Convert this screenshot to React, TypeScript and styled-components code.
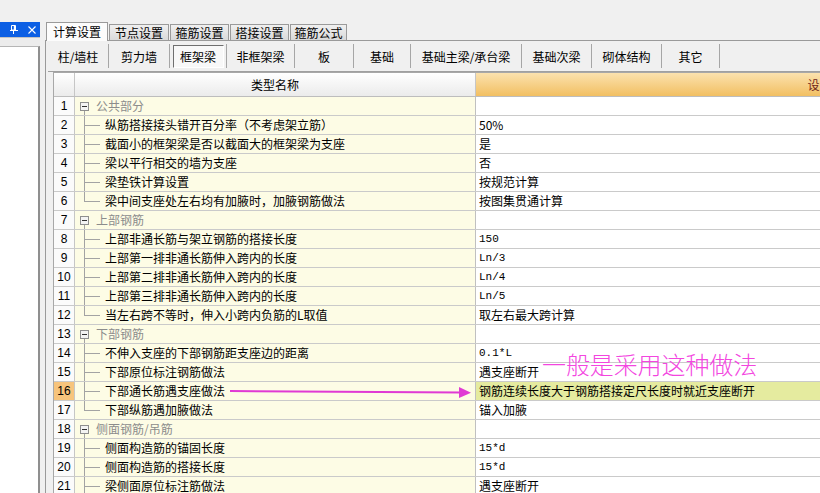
import React from 'react';
import styled, { createGlobalStyle } from 'styled-components';

const CJK = `"Noto Sans CJK SC", "Liberation Sans", sans-serif`;

const GlobalStyle = createGlobalStyle`
  html, body { margin: 0; padding: 0; background: #f0f0f0; }
  body { font-family: ${CJK}; font-size: 12px; color: #000; }
  #root { width: 820px; height: 493px; overflow: hidden; }
`;

const Screen = styled.div`
  position: relative;
  display: flex;
  width: 820px;
  height: 493px;
  padding-top: 22px;
  box-sizing: border-box;
  overflow: hidden;
  background: #f0f0f0;
`;

const Dock = styled.aside`
  width: 40px;
  flex-shrink: 0;
  display: flex;
  flex-direction: column;
`;

const DockTitle = styled.div`
  height: 15px;
  background: #0c5fe4;
  display: flex;
  align-items: center;
  gap: 10px;
  padding-left: 10px;
`;

const DockGap = styled.div`
  height: 8px;
  border-top: 1px solid #c4c4c4;
  background: #ececec;
`;

const DockBody = styled.div`
  flex: 1;
  background: #fff;
  border-top: 1px solid #b5b5b5;
  border-right: 2px solid #8f8f8f;
`;

const Main = styled.main`
  flex: 1;
  min-width: 0;
  margin-left: 5px;
  display: flex;
  flex-direction: column;
`;

const TabStrip = styled.div`
  height: 18px;
  display: flex;
  align-items: flex-end;
  gap: 1px;
  padding-left: 1px;
  position: relative;
  z-index: 1;
`;

const Tab = styled.div<{ $active?: boolean; $w: number }>`
  width: ${(p) => p.$w}px;
  height: ${(p) => (p.$active ? 19 : 16)}px;
  box-sizing: border-box;
  border: 1px solid #9a9a9a;
  border-bottom: none;
  background: ${(p) => (p.$active ? '#fcfcfc' : 'linear-gradient(#f0f0f0, #d9d9d9)')};
  margin-bottom: ${(p) => (p.$active ? '-1px' : '0')};
  display: flex;
  align-items: center;
  justify-content: center;
  font-size: 12px;
  line-height: 1;
  white-space: nowrap;
`;

const Frame = styled.section`
  flex: 1;
  min-height: 0;
  display: flex;
  flex-direction: column;
  border-top: 1px solid #9a9a9a;
  border-left: 1px solid #9a9a9a;
  padding-left: 2px;
  background: #f0f0f0;
`;

const Toolbar = styled.div`
  height: 30px;
  flex-shrink: 0;
  display: flex;
  align-items: center;
  border-bottom: 1px solid #a0a0a0;
`;

const ToolButton = styled.div<{ $w: number }>`
  width: ${(p) => p.$w}px;
  height: 24px;
  flex-shrink: 0;
  box-sizing: border-box;
  display: flex;
  align-items: center;
  justify-content: center;
  border-right: 1px solid #a6a6a6;
  font-size: 12px;
  white-space: nowrap;
`;

const Pressed = styled.span`
  display: flex;
  align-items: center;
  justify-content: center;
  width: calc(100% - 5px);
  height: 23px;
  box-sizing: border-box;
  border: 1px solid;
  border-color: #6f6f6f #ffffff #ffffff #6f6f6f;
  background: #f8f8f8;
`;

const Sheet = styled.div`
  flex: 1;
  min-height: 0;
  margin-left: 5px;
  overflow: hidden;
  border-top: 1px solid #a8a8a8;
  border-left: 1px solid #a8a8a8;
  background: #fff;
`;

const HeaderRow = styled.div`
  display: grid;
  grid-template-columns: 21px 401px 700px;
  height: 24px;
  box-sizing: border-box;
  border-bottom: 1px solid #bdbdbd;
`;

const HeadCell = styled.div<{ $accent?: boolean }>`
  box-sizing: border-box;
  border-right: 1px solid #c6c6c6;
  display: flex;
  align-items: center;
  justify-content: center;
  font-size: 12px;
  white-space: nowrap;
  overflow: hidden;
  color: ${(p) => (p.$accent ? '#6e2418' : '#000')};
  background: ${(p) => (p.$accent ? 'linear-gradient(#fbe2ae, #f2bf62)' : 'linear-gradient(#ffffff, #ebebeb)')};
`;

const Row = styled.div`
  display: grid;
  grid-template-columns: 21px 401px 700px;
  height: 19px;
  box-sizing: border-box;
  border-bottom: 1px solid #cacaca;
`;

const NumCell = styled.div<{ $hl?: boolean }>`
  box-sizing: border-box;
  border-right: 1px solid #c6c6c6;
  display: flex;
  align-items: center;
  justify-content: center;
  font-family: "Liberation Sans", sans-serif;
  font-size: 12px;
  background: ${(p) => (p.$hl ? '#f7c47c' : '#fbfbfb')};
`;

const NameCell = styled.div`
  box-sizing: border-box;
  border-right: 1px solid #c0c0c0;
  display: flex;
  align-items: center;
  overflow: hidden;
  white-space: nowrap;
  background: #fdfce5;
`;

const GutterSvg = styled.svg`
  display: block;
  flex-shrink: 0;
`;

const NameText = styled.span<{ $group?: boolean }>`
  font-size: 12px;
  line-height: 18px;
  color: ${(p) => (p.$group ? '#8c8c8c' : '#000')};
`;

const ValueCell = styled.div<{ $hl?: boolean }>`
  box-sizing: border-box;
  display: flex;
  align-items: center;
  padding-left: 3px;
  overflow: hidden;
  white-space: nowrap;
  background: ${(p) => (p.$hl ? '#e5eb9f' : '#ffffff')};
`;

const ValueText = styled.span<{ $mono?: boolean }>`
  font-family: ${(p) => (p.$mono ? `"Liberation Mono", monospace` : CJK)};
  font-size: ${(p) => (p.$mono ? 11 : 12)}px;
  line-height: 18px;
`;

const Note = styled.div`
  position: absolute;
  left: 542px;
  top: 349px;
  font-family: ${CJK};
  font-size: 24px;
  line-height: 30px;
  font-weight: 300;
  letter-spacing: -0.1px;
  color: #f346df;
  white-space: nowrap;
  pointer-events: none;
`;

const Arrow = styled.svg`
  position: absolute;
  left: 228px;
  top: 384px;
  pointer-events: none;
`;

type Item = { name: string; value?: string; group?: boolean; last?: boolean; hl?: boolean; mono?: boolean };

const items: Item[] = [
  { name: '公共部分', group: true },
  { name: '纵筋搭接接头错开百分率（不考虑架立筋）', value: '50%' },
  { name: '截面小的框架梁是否以截面大的框架梁为支座', value: '是' },
  { name: '梁以平行相交的墙为支座', value: '否' },
  { name: '梁垫铁计算设置', value: '按规范计算' },
  { name: '梁中间支座处左右均有加腋时，加腋钢筋做法', value: '按图集贯通计算', last: true },
  { name: '上部钢筋', group: true },
  { name: '上部非通长筋与架立钢筋的搭接长度', value: '150', mono: true },
  { name: '上部第一排非通长筋伸入跨内的长度', value: 'Ln/3', mono: true },
  { name: '上部第二排非通长筋伸入跨内的长度', value: 'Ln/4', mono: true },
  { name: '上部第三排非通长筋伸入跨内的长度', value: 'Ln/5', mono: true },
  { name: '当左右跨不等时，伸入小跨内负筋的L取值', value: '取左右最大跨计算', last: true },
  { name: '下部钢筋', group: true },
  { name: '不伸入支座的下部钢筋距支座边的距离', value: '0.1*L', mono: true },
  { name: '下部原位标注钢筋做法', value: '遇支座断开' },
  { name: '下部通长筋遇支座做法', value: '钢筋连续长度大于钢筋搭接定尺长度时就近支座断开', hl: true },
  { name: '下部纵筋遇加腋做法', value: '锚入加腋', last: true },
  { name: '侧面钢筋/吊筋', group: true },
  { name: '侧面构造筋的锚固长度', value: '15*d', mono: true },
  { name: '侧面构造筋的搭接长度', value: '15*d', mono: true },
  { name: '梁侧面原位标注筋做法', value: '遇支座断开' },
];

const tabs = [
  { label: '计算设置', w: 62, active: true },
  { label: '节点设置', w: 60 },
  { label: '箍筋设置', w: 59 },
  { label: '搭接设置', w: 59 },
  { label: '箍筋公式', w: 57 },
];

const tools = [
  { label: '柱/墙柱', w: 61 },
  { label: '剪力墙', w: 61 },
  { label: '框架梁', w: 57, pressed: true },
  { label: '非框架梁', w: 68 },
  { label: '板', w: 59 },
  { label: '基础', w: 57 },
  { label: '基础主梁/承台梁', w: 111 },
  { label: '基础次梁', w: 70 },
  { label: '砌体结构', w: 70 },
  { label: '其它', w: 58 },
];

const LINE = '#a3a3a3';

function Gutter({ group, last }: { group?: boolean; last?: boolean }) {
  if (group) {
    return (
      <GutterSvg width={21} height={18} viewBox="0 0 21 18">
        <line x1="9.5" y1="14" x2="9.5" y2="18" stroke={LINE} />
        <rect x="5.5" y="5.5" width="8" height="8" fill="#f3f3f3" stroke="#8e8e8e" />
        <line x1="7" y1="9.5" x2="12" y2="9.5" stroke="#303030" />
      </GutterSvg>
    );
  }
  return (
    <GutterSvg width={30} height={18} viewBox="0 0 30 18">
      <line x1="9.5" y1="0" x2="9.5" y2={last ? 10 : 18} stroke={LINE} />
      <line x1="9.5" y1="9.5" x2="25" y2="9.5" stroke={LINE} />
    </GutterSvg>
  );
}

export default function App() {
  return (
    <>
      <GlobalStyle />
      <Screen>
        <Dock>
          <DockTitle>
            <svg width="8" height="9" viewBox="0 0 8 9">
              <path d="M1.5 0.5h4v4.5h-4z" fill="none" stroke="#fff" />
              <path d="M4.5 0.5v4.5" stroke="#fff" strokeWidth="1.4" />
              <path d="M0 5.5h8" stroke="#fff" />
              <path d="M3.5 6v3" stroke="#fff" />
            </svg>
            <svg width="8" height="8" viewBox="0 0 8 8">
              <path d="M0.5 0.5l7 7M7.5 0.5l-7 7" stroke="#fff" strokeWidth="1.1" />
            </svg>
          </DockTitle>
          <DockGap />
          <DockBody />
        </Dock>
        <Main>
          <TabStrip>
            {tabs.map((t) => (
              <Tab key={t.label} $w={t.w} $active={t.active}>
                {t.label}
              </Tab>
            ))}
          </TabStrip>
          <Frame>
            <Toolbar>
              {tools.map((t) => (
                <ToolButton key={t.label} $w={t.w}>
                  {t.pressed ? <Pressed>{t.label}</Pressed> : t.label}
                </ToolButton>
              ))}
            </Toolbar>
            <Sheet>
              <HeaderRow>
                <HeadCell />
                <HeadCell>类型名称</HeadCell>
                <HeadCell $accent>设置值</HeadCell>
              </HeaderRow>
              {items.map((it, i) => (
                <Row key={i}>
                  <NumCell $hl={it.hl}>{i + 1}</NumCell>
                  <NameCell>
                    <Gutter group={it.group} last={it.last} />
                    <NameText $group={it.group}>{it.name}</NameText>
                  </NameCell>
                  <ValueCell $hl={it.hl}>
                    {it.value && <ValueText $mono={it.mono}>{it.value}</ValueText>}
                  </ValueCell>
                </Row>
              ))}
            </Sheet>
          </Frame>
        </Main>
        <Note>一般是采用这种做法</Note>
        <Arrow width="246" height="16" viewBox="0 0 246 16">
          <line x1="2" y1="7" x2="234" y2="8.5" stroke="#e03ad4" strokeWidth="2" />
          <polygon points="231,3 243,8.7 231,14" fill="#e03ad4" />
        </Arrow>
      </Screen>
    </>
  );
}
